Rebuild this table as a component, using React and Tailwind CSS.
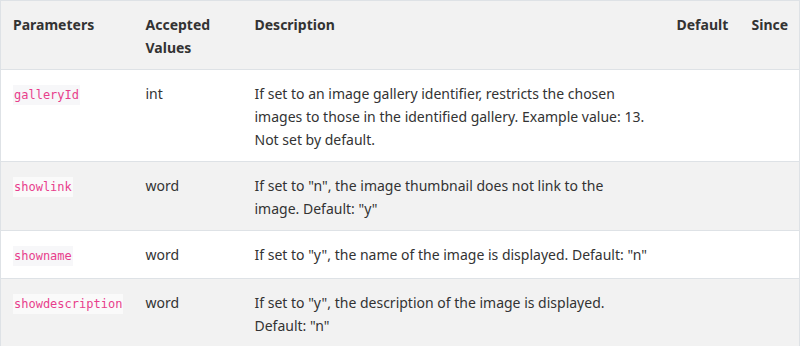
const rows = [
  {
    name: "galleryId",
    type: "int",
    desc: "If set to an image gallery identifier, restricts the chosen images to those in the identified gallery. Example value: 13. Not set by default.",
  },
  {
    name: "showlink",
    type: "word",
    desc: 'If set to "n", the image thumbnail does not link to the image. Default: "y"',
  },
  {
    name: "showname",
    type: "word",
    desc: 'If set to "y", the name of the image is displayed. Default: "n"',
  },
  {
    name: "showdescription",
    type: "word",
    desc: 'If set to "y", the description of the image is displayed. Default: "n"',
  },
];

export default function App() {
  return (
    <div className="bg-white w-[800px] h-[346px] overflow-hidden font-['Noto_Sans',sans-serif] text-[14px] leading-[23px] text-[#333]">
      <table className="w-full table-fixed border-collapse border border-[#dee2e6] text-left">
        <colgroup>
          <col className="w-[133px]" />
          <col className="w-[109px]" />
          <col className="w-[422px]" />
          <col className="w-[75px]" />
          <col />
        </colgroup>
        <thead>
          <tr className="bg-[#f2f2f2] border-b border-[#dee2e6]">
            <th className="px-3 pt-3 pb-[10px] align-top font-bold">Parameters</th>
            <th className="px-3 pt-3 pb-[10px] align-top font-bold">Accepted Values</th>
            <th className="px-3 pt-3 pb-[10px] align-top font-bold">Description</th>
            <th className="px-3 pt-3 pb-[10px] align-top font-bold">Default</th>
            <th className="px-3 pt-3 pb-[10px] align-top font-bold">Since</th>
          </tr>
        </thead>
        <tbody>
          {rows.map((r, i) => (
            <tr
              key={r.name}
              className={`border-b border-[#dee2e6] ${i % 2 === 1 ? "bg-[#f2f2f2]" : "bg-white"}`}
            >
              <td className="px-3 pt-3 pb-[10px] align-top">
                <code
                  className={`font-['DejaVu_Sans_Mono',monospace] text-[12px] text-[#e83e8c] px-px py-[3px] ${i % 2 === 1 ? "bg-[#fafafa]" : "bg-[#f7f7f9]"}`}
                >
                  {r.name}
                </code>
              </td>
              <td className="px-3 pt-3 pb-[10px] align-top">{r.type}</td>
              <td className="px-3 pt-3 pb-[10px] align-top">
                <div className="w-[395px]">{r.desc}</div>
              </td>
              <td className="px-3 pt-3 pb-[10px] align-top"></td>
              <td className="px-3 pt-3 pb-[10px] align-top"></td>
            </tr>
          ))}
        </tbody>
      </table>
    </div>
  );
}
